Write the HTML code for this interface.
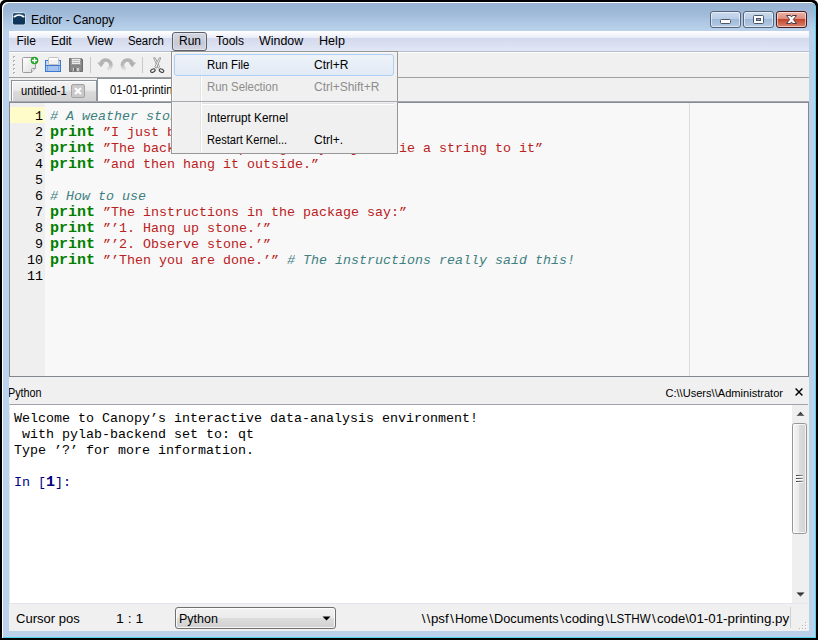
<!DOCTYPE html>
<html>
<head>
<meta charset="utf-8">
<title>Editor - Canopy</title>
<style>
html,body{margin:0;padding:0;}
body{width:818px;height:640px;overflow:hidden;background:#fff;position:relative;font-family:"Liberation Sans",sans-serif;font-size:12px;color:#000;}
.abs{position:absolute;}
.sx{display:inline-block;transform-origin:left center;}
.seg{position:absolute;top:0;white-space:nowrap;}
#win{position:absolute;left:0;top:0;width:818px;height:640px;background:#000;border-radius:5px 5px 0 0;overflow:hidden;}
#frame{position:absolute;left:2px;top:2px;width:814px;height:636px;border-radius:6px 6px 0 0;background:linear-gradient(#98b3d2 0px,#9cb7d6 8px,#a3bddb 14px,#aec7e3 20px,#b9d1ea 28px,#b9d1ea 100%);box-shadow:inset 1px 1px 0 #fff, inset -1px -1px 0 #4fd6ee;}
#client{position:absolute;left:9px;top:31px;width:800px;height:600px;background:#f0f0f0;overflow:hidden;}
#title{position:absolute;left:31px;top:12px;font-size:12px;line-height:16px;white-space:nowrap;}
.cap{position:absolute;top:11px;height:15px;border:1px solid #56647a;border-radius:3px;box-shadow:inset 0 0 0 1px rgba(255,255,255,.55);}
/* menubar */
#menubar{position:absolute;left:0;top:0;width:800px;height:20px;background:linear-gradient(#ffffff 0,#fdfdff 1px,#e9ecf7 7px,#d3d9ec 7px,#e2e7f6 20px);border-bottom:1px solid #b6bccc;}
.mi{position:absolute;top:3px;font-size:12px;line-height:15px;white-space:nowrap;}
#runbtn{position:absolute;left:163px;top:1px;width:33px;height:17px;border:1px solid #5b5f68;border-radius:3px;background:linear-gradient(#d4d7e1,#c6cad6 60%,#d3d6e1);box-shadow:inset 0 0 0 1px rgba(255,255,255,.35);}
/* toolbar */
#toolbar{position:absolute;left:0;top:21px;width:800px;height:25px;background:#f0f0f0;border-bottom:1px solid #a0a0a0;box-shadow:inset 0 1px 0 #fff;}
/* tabs */
#tabbar{position:absolute;left:0;top:47px;width:800px;height:24px;background:#f0f0f0;}
.tab{position:absolute;font-size:12px;white-space:nowrap;}
/* editor */
#editor{position:absolute;left:0;top:70px;width:798px;height:273px;border:1px solid #828790;border-top:2px solid #858993;background:#f8f8f8;overflow:hidden;}
#gutter{position:absolute;left:0;top:0;width:35px;height:274px;background:#efefef;}
.ln{position:absolute;right:765px;width:30px;text-align:right;font-family:"Liberation Mono",monospace;font-size:13.333px;line-height:16px;color:#000;}
.cl{position:absolute;left:40px;font-family:"Liberation Mono",monospace;font-size:13.333px;line-height:16px;white-space:pre;}
.k{color:#008000;font-weight:bold;font-size:15px;}
.s{color:#ba2121;}
.c{color:#408080;font-style:italic;}
/* console */
#console{position:absolute;left:0;top:373px;width:799px;height:200px;box-sizing:border-box;background:#fff;border:1px solid #e3e6ec;border-right:0;border-top:1px solid #9fa2a8;overflow:hidden;}
.co{position:absolute;left:4px;font-family:"Liberation Mono",monospace;font-size:13.333px;line-height:16px;white-space:pre;color:#000;}
/* status */
#status{position:absolute;left:0;top:575px;width:800px;height:25px;background:#f0f0f0;}
/* menu popup */
#popup{position:absolute;left:171px;top:51px;width:227px;height:103px;background:#f0f0f0;border:1px solid #979797;box-sizing:border-box;box-shadow:inset 1px 1px 0 #f8f8f8;}
.pi{position:absolute;left:35px;font-size:12px;line-height:15px;white-space:nowrap;}
.ps{position:absolute;left:142px;font-size:12px;line-height:15px;white-space:nowrap;}
</style>
</head>
<body>
<div id="win">
 <div id="frame"></div>
 <!-- title icon -->
 <svg class="abs" style="left:12px;top:12px" width="15" height="15" viewBox="0 0 15 15">
  <defs><linearGradient id="gico" x1="0" y1="0" x2="0" y2="1"><stop offset="0" stop-color="#3f6685"/><stop offset=".35" stop-color="#123a5e"/><stop offset="1" stop-color="#0d3154"/></linearGradient></defs>
  <rect x="0.500" y="0.500" width="13" height="12.500" rx="2" fill="url(#gico)" stroke="#cfdceb" stroke-width="1"/>
  <path d="M2.300 4.700Q7 1.300 11.700 4.700" fill="none" stroke="#fff" stroke-width="1.700" stroke-linecap="round"/>
 </svg>
 <div id="title">Editor - Canopy</div>
 <!-- caption buttons -->
 <div class="cap" style="left:710px;width:29px;background:linear-gradient(#cbdbee 0,#b9cde5 45%,#9fb9d8 50%,#b6cce6 100%);"></div>
 <div class="cap" style="left:743px;width:29px;background:linear-gradient(#cbdbee 0,#b9cde5 45%,#9fb9d8 50%,#b6cce6 100%);"></div>
 <div class="cap" style="left:776px;width:29px;border-color:#4a1a1c;background:linear-gradient(#ecb5a8 0,#dd8d7d 45%,#c3452b 50%,#d98670 100%);"></div>
 <svg class="abs" style="left:710px;top:11px" width="100" height="17" viewBox="0 0 100 17">
  <rect x="10.500" y="8.500" width="10" height="4" rx="1" fill="#fff" stroke="#4b5566" stroke-width="1"/>
  <rect x="43.500" y="4.500" width="10" height="8" rx="1" fill="#fff" stroke="#4b5566" stroke-width="1"/>
  <rect x="46.500" y="7.500" width="4" height="2" fill="#8fa9cc" stroke="#4b5566" stroke-width="1"/>
  <path d="M76.500 4.500h4l1 1.600 1-1.600h4l-3.200 4 3.200 4h-4l-1-1.600-1 1.600h-4l3.200-4z" fill="#fff" stroke="#4e3a44" stroke-width="1" stroke-linejoin="round"/>
 </svg>

 <div id="client">
  <div id="menubar">
   <div id="runbtn"></div>
   <div class="mi" style="left:7.500px">File</div>
   <div class="mi" style="left:42px">Edit</div>
   <div class="mi" style="left:78px">View</div>
   <div class="mi" style="left:119px"><span class="sx" style="transform:scaleX(.945)">Search</span></div>
   <div class="mi" style="left:170px">Run</div>
   <div class="mi" style="left:207px">Tools</div>
   <div class="mi" style="left:250px"><span class="sx" style="transform:scaleX(1.035)">Window</span></div>
   <div class="mi" style="left:310px"><span class="sx" style="transform:scaleX(1.05)">Help</span></div>
  </div>
  <div id="toolbar">
   <svg class="abs" style="left:0;top:0" width="170" height="25" viewBox="0 0 170 25">
    <!-- handle dots -->
    <g fill="#b4b4b4"><rect x="4" y="4" width="2" height="2"/><rect x="4" y="8" width="2" height="2"/><rect x="4" y="12" width="2" height="2"/><rect x="4" y="16" width="2" height="2"/><rect x="4" y="20" width="2" height="2"/></g>
    <g fill="#ffffff"><rect x="5" y="5" width="1" height="1"/><rect x="5" y="9" width="1" height="1"/><rect x="5" y="13" width="1" height="1"/><rect x="5" y="17" width="1" height="1"/><rect x="5" y="21" width="1" height="1"/></g>
    <!-- new -->
    <defs>
     <linearGradient id="gpage" x1="0" y1="0" x2="1" y2="1"><stop offset="0" stop-color="#ffffff"/><stop offset="1" stop-color="#dcdcdc"/></linearGradient>
     <linearGradient id="gblue" x1="0" y1="0" x2="0" y2="1"><stop offset="0" stop-color="#c5dbf6"/><stop offset="1" stop-color="#8eb6ec"/></linearGradient>
     <linearGradient id="ggrey" x1="0" y1="0" x2="0" y2="1"><stop offset="0" stop-color="#c9c9c9"/><stop offset="1" stop-color="#a6a6a6"/></linearGradient>
    </defs>
    <path d="M14.500 5.500h9.500q2.500 0 2.500 2v9l-4 4h-8q-1 0-1-1v-13q0-1 1-1z" fill="url(#gpage)" stroke="#9c9c9c" stroke-width="1"/>
    <path d="M22.500 20.500v-3q0-1 1-1h3" fill="#e4e4e4" stroke="#9c9c9c" stroke-width="1"/>
    <circle cx="25.500" cy="8.500" r="3.800" fill="#22a424"/>
    <path d="M25.500 6v5M23 8.500h5" stroke="#fff" stroke-width="1.400"/>
    <!-- open -->
    <rect x="36.500" y="8.500" width="15" height="11" fill="#a4c3ef" stroke="#3b78d2" stroke-width="1"/>
    <rect x="37" y="9" width="14" height="5" fill="#c6daf5"/>
    <path d="M38.500 14v5M49.500 14v5" stroke="#7fa9e6" stroke-width="1"/>
    <path d="M37 13.500h14" stroke="#3b78d2" stroke-width="1"/>
    <rect x="39.500" y="5.500" width="10" height="7" rx="1" fill="#f2f2f2" stroke="#c0c0c0" stroke-width="1"/>
    <rect x="40" y="6" width="9" height="2" fill="#ffffff"/>
    <!-- save -->
    <path d="M60.500 6.500h12l1 1v12h-13z" fill="#868686" stroke="#6c6c6c" stroke-width="1"/>
    <rect x="62.500" y="6.500" width="9" height="6" fill="#ececec" stroke="#9a9a9a" stroke-width="1"/>
    <path d="M63.500 8.500h7M63.500 10.500h7" stroke="#b9b9b9" stroke-width="1"/>
    <rect x="63.500" y="15.500" width="7" height="4" fill="#cdcdcd" stroke="#8e8e8e" stroke-width="1"/>
    <rect x="65" y="16" width="2.500" height="3.500" fill="#6c6c6c"/>
    <!-- sep -->
    <rect x="81" y="5" width="1" height="16" fill="#c8c8c8"/>
    <!-- undo -->
    <defs>
     <linearGradient id="gfade" gradientUnits="userSpaceOnUse" x1="0" y1="7" x2="0" y2="19"><stop offset="0" stop-color="#b0b0b0"/><stop offset=".5" stop-color="#b9b9b9"/><stop offset="1" stop-color="#d6d6d6" stop-opacity=".25"/></linearGradient>
    </defs>
    <path d="M92 12A5 5 0 1 1 98.500 17.800" fill="none" stroke="url(#gfade)" stroke-width="3.600"/>
    <path d="M88.300 10.500L95.700 10.500L92 15.200Z" fill="#b4b4b4"/>
    <!-- redo -->
    <path d="M123.300 12A5 5 0 1 0 116.800 17.800" fill="none" stroke="url(#gfade)" stroke-width="3.600"/>
    <path d="M127 10.500L119.600 10.500L123.300 15.200Z" fill="#b0b0b0"/>
    <!-- sep -->
    <rect x="133" y="5" width="1" height="16" fill="#c8c8c8"/>
    <!-- scissors -->
    <path d="M144.600 5.800L146.200 5.800L150.600 15L149 16.200Z" fill="#f6f6f6" stroke="#8c8c8c" stroke-width=".8"/>
    <path d="M151.800 5.800L150.200 5.800L145.800 15L147.400 16.200Z" fill="#f6f6f6" stroke="#8c8c8c" stroke-width=".8"/>
    <ellipse cx="143.900" cy="18.600" rx="2.400" ry="1.500" fill="none" stroke="#444" stroke-width="1.100" transform="rotate(-28 143.900 18.600)"/>
    <ellipse cx="152.500" cy="18.600" rx="2.400" ry="1.500" fill="none" stroke="#444" stroke-width="1.100" transform="rotate(28 152.500 18.600)"/>
   </svg>
  </div>
  <div id="tabbar">
   <div class="abs" style="left:2px;top:2px;width:86px;height:21px;box-sizing:border-box;border:1px solid #8e929b;border-bottom:none;background:linear-gradient(#f4f4f4 0,#ececec 45%,#d9d9d9 55%,#d2d2d2 100%);box-shadow:inset 1px 1px 0 #fff;"></div>
   <div class="tab" style="left:12px;top:6px;line-height:15px;font-size:12px"><span class="sx" style="transform:scaleX(.925)">untitled-1</span></div>
   <div class="abs" style="left:62px;top:6px;width:14px;height:14px;box-sizing:border-box;border:1px solid #a3a3a3;border-radius:2px;background:#c9c9c9;"></div>
   <svg class="abs" style="left:62px;top:6px" width="14" height="14" viewBox="0 0 14 14"><path d="M4 4l6 6M10 4l-6 6" stroke="#fff" stroke-width="2"/></svg>
   <div class="abs" style="left:88px;top:0;width:130px;height:24px;box-sizing:border-box;border:1px solid #8e929b;border-bottom:none;background:#fff;"></div>
   <div class="tab" style="left:101px;top:5px;line-height:15px;font-size:12px"><span class="sx" style="transform:scaleX(.925)">01-01-printing.py</span></div>
  </div>
  <div class="abs" style="left:0;top:70px;width:800px;height:1px;background:#a6a9b0;z-index:3"></div>
  <div id="editor">
   <div id="gutter"></div>
   <div class="abs" style="left:0;top:4px;width:35px;height:16px;background:#fffcc9"></div>
   <div class="abs" style="left:679px;top:0;width:1px;height:274px;background:#dcdcdc"></div>
   <div class="ln" style="top:6px">1</div><div class="cl" style="top:6px"><span class="c"># A weather stone</span></div>
   <div class="ln" style="top:22px">2</div><div class="cl" style="top:22px"><span class="k">print</span> <span class="s">”I just bought a weather stone.”</span></div>
   <div class="ln" style="top:38px">3</div><div class="cl" style="top:38px"><span class="k">print</span> <span class="s">”The back of the package says: just tie a string to it”</span></div>
   <div class="ln" style="top:54px">4</div><div class="cl" style="top:54px"><span class="k">print</span> <span class="s">”and then hang it outside.”</span></div>
   <div class="ln" style="top:70px">5</div><div class="cl" style="top:70px"></div>
   <div class="ln" style="top:86px">6</div><div class="cl" style="top:86px"><span class="c"># How to use</span></div>
   <div class="ln" style="top:102px">7</div><div class="cl" style="top:102px"><span class="k">print</span> <span class="s">”The instructions in the package say:”</span></div>
   <div class="ln" style="top:118px">8</div><div class="cl" style="top:118px"><span class="k">print</span> <span class="s">”’1. Hang up stone.’”</span></div>
   <div class="ln" style="top:134px">9</div><div class="cl" style="top:134px"><span class="k">print</span> <span class="s">”’2. Observe stone.’”</span></div>
   <div class="ln" style="top:150px">10</div><div class="cl" style="top:150px"><span class="k">print</span> <span class="s">”’Then you are done.’”</span> <span class="c"># The instructions really said this!</span></div>
   <div class="ln" style="top:166px">11</div><div class="cl" style="top:166px"></div>
  </div>
  <div class="abs" style="left:-1px;top:355px;font-size:12px;line-height:14px;white-space:nowrap"><span class="sx" style="transform:scaleX(.9)">Python</span></div>
  <div class="abs" style="right:26px;top:355px;font-size:11.500px;line-height:14px;white-space:nowrap"><span class="sx" style="transform:scaleX(.964);transform-origin:right">C:\\Users\\Administrator</span></div>
  <svg class="abs" style="left:785px;top:356px" width="10" height="10" viewBox="0 0 10 10"><path d="M1.600 1.600l6.800 6.800M8.400 1.600l-6.800 6.800" stroke="#000" stroke-width="1.400"/></svg>
  <div id="console">
   <div class="co" style="top:6px">Welcome to Canopy’s interactive data-analysis environment!</div>
   <div class="co" style="top:22px"> with pylab-backend set to: qt</div>
   <div class="co" style="top:38px">Type ’?’ for more information.</div>
   <div class="co" style="top:70px;color:#000080">In [<b style="font-size:15px">1</b>]:</div>
   <!-- scrollbar -->
   <div class="abs" style="left:782px;top:0;width:16px;height:198px;background:#efefef;"></div>
   <svg class="abs" style="left:782px;top:0" width="16" height="198" viewBox="0 0 16 198">
    <defs><linearGradient id="gth" x1="0" y1="0" x2="1" y2="0"><stop offset="0" stop-color="#f6f6f6"/><stop offset=".45" stop-color="#ebebeb"/><stop offset=".5" stop-color="#dcdcdc"/><stop offset="1" stop-color="#d2d2d2"/></linearGradient>
    <linearGradient id="ggl" gradientUnits="userSpaceOnUse" x1="4" y1="0" x2="11" y2="0"><stop offset="0" stop-color="#3a3a3a"/><stop offset="1" stop-color="#9a9a9a"/></linearGradient>
    <linearGradient id="gar" x1="0" y1="0" x2="0" y2="1"><stop offset="0" stop-color="#1c1c1c"/><stop offset="1" stop-color="#707070"/></linearGradient></defs>
    <path d="M4.500 11L8.500 6.800L12.500 11Z" fill="url(#gar)"/>
    <rect x="0.500" y="18.500" width="14" height="110" rx="2" fill="url(#gth)" stroke="#979797"/>
    <rect x="1.500" y="19.500" width="12" height="108" rx="1" fill="none" stroke="#ffffff" stroke-opacity=".7"/>
    <path d="M4 71.500h7M4 74.500h7M4 77.500h7" stroke="#ffffff" stroke-width="1"/><path d="M4 70.500h7M4 73.500h7M4 76.500h7" stroke="url(#ggl)" stroke-width="1"/>
    <path d="M4.500 187.500L8.500 191.700L12.500 187.500Z" fill="url(#gar)"/>
   </svg>
  </div>
  <div id="status">
   <div class="abs" style="left:7px;top:5px;font-size:13.300px;line-height:16px;white-space:nowrap"><span class="sx" style="transform:scaleX(.98)">Cursor pos</span></div>
   <div class="abs" style="left:107px;top:5px;font-size:13.300px;line-height:16px;white-space:nowrap"><span class="sx" style="transform:scaleX(1.05)">1 : 1</span></div>
   <div class="abs" style="left:166px;top:1px;width:161px;height:22px;box-sizing:border-box;border:1px solid #707070;border-radius:3px;background:linear-gradient(#f2f2f2 0,#ebebeb 48%,#dddddd 52%,#cfcfcf 100%);box-shadow:inset 0 0 0 1px rgba(255,255,255,.8);"></div>
   <div class="abs" style="left:170px;top:5px;font-size:13.300px;line-height:16px;white-space:nowrap"><span class="sx" style="transform:scaleX(.94)">Python</span></div>
   <svg class="abs" style="left:313px;top:10px" width="9" height="5" viewBox="0 0 9 5"><path d="M0.500 0.500h8l-4 4z" fill="#000"/></svg>
   <div class="abs" style="left:412px;top:5px;width:370px;height:16px;font-size:13.300px;line-height:16px;white-space:nowrap"><span class="seg" style="left:0.7px;letter-spacing:1.450px">\\</span><span class="seg" style="left:10.3px"><span class="sx" style="transform:scaleX(0.997)">psf</span></span><span class="seg" style="left:29.2px">\</span><span class="seg" style="left:34.2px"><span class="sx" style="transform:scaleX(0.930)">Home</span></span><span class="seg" style="left:68.4px">\</span><span class="seg" style="left:73.4px"><span class="sx" style="transform:scaleX(0.960)">Documents</span></span><span class="seg" style="left:139.3px">\</span><span class="seg" style="left:144.3px"><span class="sx" style="transform:scaleX(0.998)">coding</span></span><span class="seg" style="left:184.5px">\</span><span class="seg" style="left:189.3px"><span class="sx" style="transform:scaleX(0.874)">LSTHW</span></span><span class="seg" style="left:231.0px">\</span><span class="seg" style="left:235.7px"><span class="sx" style="transform:scaleX(0.981)">code</span></span><span class="seg" style="left:264.2px">\</span><span class="seg" style="left:268.2px"><span class="sx" style="transform:scaleX(1.003)">01-01-printing.py</span></span></div>
   <div class="abs" style="left:781px;top:1px;width:1px;height:21px;background:#d0d0d0"></div>
   <svg class="abs" style="left:786px;top:11px" width="13" height="14" viewBox="0 0 13 14"><g fill="#ffffff"><rect x="11" y="6" width="1" height="1"/><rect x="8" y="9" width="1" height="1"/><rect x="11" y="9" width="1" height="1"/><rect x="5" y="12" width="1" height="1"/><rect x="8" y="12" width="1" height="1"/><rect x="11" y="12" width="1" height="1"/></g><g fill="#b8b8b8"><rect x="10" y="5" width="1" height="1"/><rect x="7" y="8" width="1" height="1"/><rect x="10" y="8" width="1" height="1"/><rect x="4" y="11" width="1" height="1"/><rect x="7" y="11" width="1" height="1"/><rect x="10" y="11" width="1" height="1"/></g></svg>
  </div>
 </div>
 <div id="popup">
  <div class="abs" style="left:28px;top:2px;width:1px;height:97px;background:#e2e3e3"></div>
  <div class="abs" style="left:29px;top:2px;width:1px;height:97px;background:#fff"></div>
  <div class="abs" style="left:2px;top:2px;width:220px;height:22px;box-sizing:border-box;border:1px solid #aecff7;border-radius:3px;background:linear-gradient(rgba(238,243,250,.85),rgba(224,233,246,.85));"></div>
  <div class="pi" style="top:6px"><span class="sx" style="transform:scaleX(.95)">Run File</span></div><div class="ps" style="top:6px"><span class="sx" style="transform:scaleX(1)">Ctrl+R</span></div>
  <div class="pi" style="top:28px;color:#8d8d8d"><span class="sx" style="transform:scaleX(.95)">Run Selection</span></div><div class="ps" style="top:28px;color:#8d8d8d">Ctrl+Shift+R</div>
  <div class="abs" style="left:30px;top:51px;width:192px;height:1px;background:#e0e0e0"></div>
  <div class="abs" style="left:30px;top:52px;width:192px;height:1px;background:#fff"></div>
  <div class="pi" style="top:59px"><span class="sx" style="transform:scaleX(.98)">Interrupt Kernel</span></div>
  <div class="pi" style="top:81px"><span class="sx" style="transform:scaleX(.925)">Restart Kernel...</span></div><div class="ps" style="top:81px">Ctrl+.</div>
 </div>
</div>
</body>
</html>
